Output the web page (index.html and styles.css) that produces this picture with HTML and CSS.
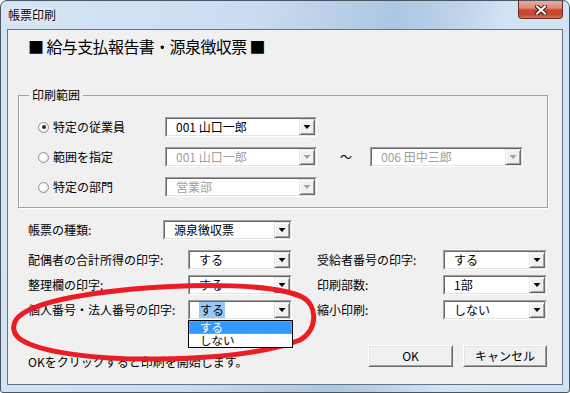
FILE: index.html
```html
<!DOCTYPE html>
<html lang="ja">
<head>
<meta charset="utf-8">
<title>帳票印刷</title>
<link rel="stylesheet" href="styles.css">
</head>
<body>
<div class="window">
  <div class="titlebar">
    <span class="title">帳票印刷</span>
    <div class="close">
      <svg width="12" height="10" viewBox="0 0 12 10"><path d="M2 1.5 L10 8.5 M10 1.5 L2 8.5" stroke="#3a1f1a" stroke-width="4" stroke-linecap="square" fill="none"/><path d="M2 1.5 L10 8.5 M10 1.5 L2 8.5" stroke="#fff" stroke-width="2" stroke-linecap="square" fill="none"/></svg>
    </div>
  </div>
  <div class="client">
    <h1 class="heading">■ 給与支払報告書・源泉徴収票 ■</h1>

    <fieldset class="group">
      <legend>印刷範囲</legend>
      <div class="range-row">
        <label class="radio"><span class="radio-dot checked"></span>特定の従業員</label>
        <div class="combo w152"><div class="combo-in"><span class="val">001 山口一郎</span><span class="drop"><i class="arrow"></i></span></div></div>
      </div>
      <div class="range-row">
        <label class="radio"><span class="radio-dot"></span>範囲を指定</label>
        <div class="combo w152 disabled"><div class="combo-in"><span class="val">001 山口一郎</span><span class="drop"><i class="arrow"></i></span></div></div>
        <span class="tilde">～</span>
        <div class="combo w153 disabled"><div class="combo-in"><span class="val">006 田中三郎</span><span class="drop"><i class="arrow"></i></span></div></div>
      </div>
      <div class="range-row">
        <label class="radio"><span class="radio-dot"></span>特定の部門</label>
        <div class="combo w152 disabled"><div class="combo-in"><span class="val">営業部</span><span class="drop"><i class="arrow"></i></span></div></div>
      </div>
    </fieldset>

    <div class="kind-row">
      <span class="kind-label">帳票の種類:</span>
      <div class="combo w129"><div class="combo-in"><span class="val">源泉徴収票</span><span class="drop"><i class="arrow"></i></span></div></div>
    </div>

    <div class="opts">
      <span class="lbl">配偶者の合計所得の印字:</span>
      <div class="combo"><div class="combo-in"><span class="val">する</span><span class="drop"><i class="arrow"></i></span></div></div>
      <span class="lbl right">受給者番号の印字:</span>
      <div class="combo"><div class="combo-in"><span class="val">する</span><span class="drop"><i class="arrow"></i></span></div></div>

      <span class="lbl">整理欄の印字:</span>
      <div class="combo"><div class="combo-in"><span class="val">する</span><span class="drop"><i class="arrow"></i></span></div></div>
      <span class="lbl right">印刷部数:</span>
      <div class="combo"><div class="combo-in"><span class="val">1部</span><span class="drop"><i class="arrow"></i></span></div></div>

      <span class="lbl">個人番号・法人番号の印字:</span>
      <div class="combo open"><div class="combo-in"><span class="val"><span class="sel">する</span></span><span class="drop"><i class="arrow"></i></span></div>
        <ul class="list">
          <li class="hi">する</li>
          <li>しない</li>
        </ul>
      </div>
      <span class="lbl right">縮小印刷:</span>
      <div class="combo"><div class="combo-in"><span class="val">しない</span><span class="drop"><i class="arrow"></i></span></div></div>
    </div>

    <div class="footer">
      <span class="hint">OKをクリックすると印刷を開始します。</span>
      <button class="btn ok">OK</button>
      <button class="btn cancel">キャンセル</button>
    </div>
  </div>
</div>
<svg class="annot" width="570" height="393" viewBox="0 0 570 393">
  <path d="M14 325 C16 308 60 296 133 289 C200 283 275 284 302 297 C318 305 318 330 300 340 C270 352 220 358 160 359 C100 360 40 353 20 339 C14 334 13 329 14 325 Z" fill="none" stroke="#ec1c24" stroke-width="5"/>
</svg>
</body>
</html>
```

FILE: styles.css
```css
* { box-sizing: border-box; }
html, body { margin: 0; padding: 0; }
body {
  position: relative;
  width: 570px;
  height: 393px;
  overflow: hidden;
  background: #fff;
  font-family: "Noto Sans CJK JP", "Noto Sans", sans-serif;
  font-size: 12px;
  line-height: 14px;
  color: #000;
}

.window {
  width: 570px;
  height: 393px;
  border: 1px solid #4b5664;
  border-radius: 7px 7px 3px 3px;
  background: linear-gradient(100deg, #d5e5f5 0%, #cadcf0 40%, #acc7e2 62%, #b9d0e8 70%, #d2e3f4 80%, #d0e2f3 100%);
  display: flex;
  flex-direction: column;
  overflow: hidden;
}

.titlebar {
  height: 28px;
  display: flex;
  justify-content: space-between;
  align-items: flex-start;
}
.title {
  padding: 7px 0 0 7px;
  font-size: 12px;
  line-height: 14px;
  text-shadow: 0 0 5px #fff, 0 0 3px #fff;
}
.close {
  width: 45px;
  height: 18px;
  margin-right: 6px;
  border: 1px solid #6c2c22;
  border-top: none;
  border-radius: 0 0 4px 4px;
  background: linear-gradient(#e9ab9b 0%, #dc8a77 42%, #c9472f 52%, #c44a33 80%, #d3735a 100%);
  display: flex;
  align-items: center;
  justify-content: center;
}

.client {
  flex: 1;
  margin: 0 6px 7px;
  border: 1px solid #657384;
  background: #f0f0f0;
}

.heading {
  margin: 6px 0 0 20px;
  font-size: 16px;
  line-height: 20px;
  font-weight: normal;
  letter-spacing: -0.6px;
}

.group {
  margin: 32px 0 0 10px;
  width: 530px;
  padding: 10px 0 5px 0;
  border: 1px solid #a0a0a0;
  box-shadow: 1px 1px 0 #fff, inset 1px 0 0 #fff;
}
.group legend {
  margin-left: 10px;
  padding: 0 3px;
  line-height: 14px;
}

.range-row {
  display: flex;
  align-items: center;
  height: 30px;
  padding-left: 19px;
}
.radio {
  flex: 0 0 127px;
  display: flex;
  align-items: center;
  gap: 4px;
}
.radio-dot {
  position: relative;
  width: 11px;
  height: 11px;
  border-radius: 50%;
  border: 1px solid #8f9090;
  background: radial-gradient(circle at 40% 40%, #ffffff 30%, #dcdcdc 100%);
}
.radio-dot.checked::after {
  content: "";
  position: absolute;
  left: 2.5px;
  top: 2.5px;
  width: 4px;
  height: 4px;
  border-radius: 50%;
  background: #2a2a2a;
}
.tilde {
  margin: 0 18px 0 23px;
  width: 12px;
}

.combo {
  position: relative;
  height: 20px;
  width: 104px;
  border: 1px solid;
  border-color: #a0a0a0 #ffffff #ffffff #a0a0a0;
}
.combo.w152 { width: 152px; }
.combo.w153 { width: 153px; }
.combo.w129 { width: 129px; }
.combo-in {
  height: 100%;
  display: flex;
  background: #fff;
  border: 1px solid;
  border-color: #696969 #e3e3e3 #e3e3e3 #696969;
}
.val {
  flex: 1;
  padding-left: 9px;
  line-height: 16px;
  white-space: nowrap;
  overflow: hidden;
}
.sel {
  background: #99c9f7;
  padding: 1px 1px;
}
.drop {
  width: 16px;
  height: 16px;
  background: #f0f0f0;
  border: 1px solid;
  border-color: #e3e3e3 #696969 #696969 #e3e3e3;
  box-shadow: inset 1px 1px 0 #fff, inset -1px -1px 0 #a0a0a0;
  display: flex;
  align-items: center;
  justify-content: center;
}
.arrow {
  width: 7px;
  height: 4px;
  background: #000;
  clip-path: polygon(0 0, 100% 0, 50% 100%);
}
.disabled .val { color: #a0a0a0; }
.disabled .arrow { background: #a0a0a0; }

.kind-row {
  display: flex;
  align-items: center;
  height: 20px;
  margin: 12px 0 0 20px;
}
.kind-label { flex: 0 0 135px; }

.opts {
  display: grid;
  grid-template-columns: 160px 104px 151px 104px;
  grid-auto-rows: 20px;
  row-gap: 5px;
  margin: 10px 0 0 20px;
  align-items: center;
}
.lbl { white-space: nowrap; }
.lbl.right { padding-left: 25px; }

.list {
  position: absolute;
  left: -1px;
  top: 19px;
  width: 105px;
  height: 28px;
  margin: 0;
  padding: 0;
  list-style: none;
  background: #fff;
  border: 1px solid #000;
  z-index: 2;
}
.list li {
  height: 13px;
  line-height: 13px;
  font-size: 11.5px;
  padding-left: 11px;
}
.list li.hi {
  background: #3399ff;
  color: #fff;
  outline: 1px dotted #e8a040;
  outline-offset: -1px;
}

.footer {
  display: flex;
  width: 519px;
  height: 22px;
  margin: 25px 0 0 20px;
  gap: 10px;
}
.hint {
  flex: 1;
  align-self: flex-end;
  margin-bottom: -2px;
  line-height: 14px;
}
.btn {
  height: 22px;
  padding: 0;
  font: inherit;
  line-height: 18px;
  color: #000;
  background: #f0f0f0;
  border: 1px solid;
  border-color: #fff #696969 #696969 #fff;
  box-shadow: inset 1px 1px 0 #e3e3e3, inset -1px -1px 0 #a0a0a0;
}
.btn.ok { width: 85px; }
.btn.cancel { width: 84px; }

.annot {
  position: absolute;
  left: 0;
  top: 0;
  pointer-events: none;
}
```
